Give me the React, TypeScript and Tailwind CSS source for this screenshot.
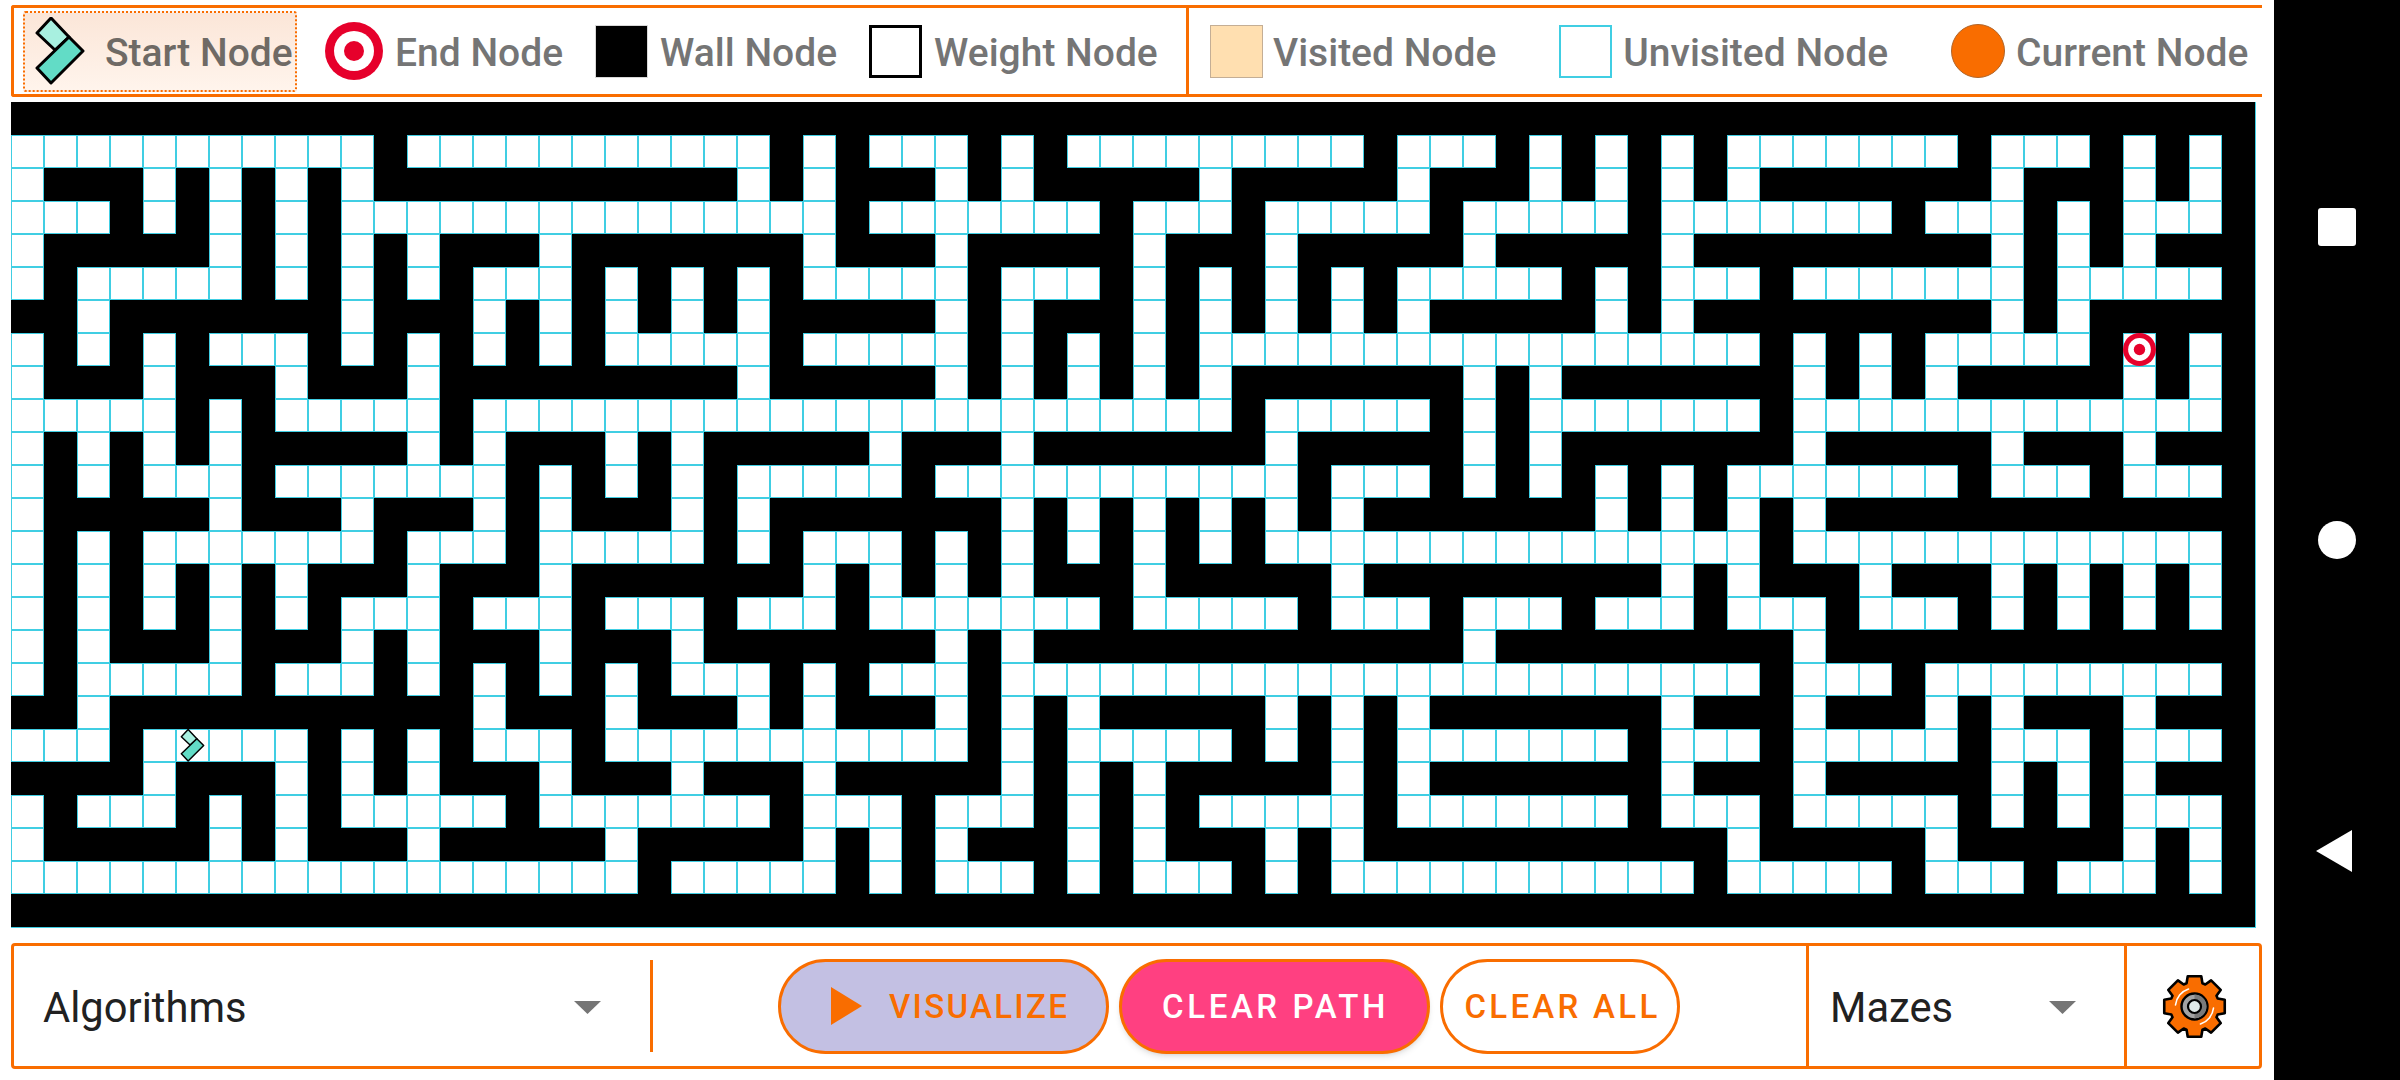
// Maze legend + grid + control bar
const ROWS: string[] = [
  "",
  "0-10,12-22,24,26-28,30,32-40,42-44,46,48,50,52-58,60-62,64,66",
  "0,4,6,8,10,22,24,28,30,36,42,46,48,50,52,60,64,66",
  "0-2,4,6,8,10-24,26-32,34-36,38-42,44-48,50-56,58-60,62,64-66",
  "0,6,8,10,12,16,24,28,34,38,44,50,60,62,64",
  "0,2-6,8,10,12,14-16,18,20,22,24-28,30-32,34,36,38,40,42-46,48,50-52,54-60,62-66",
  "2,10,14,16,18,20,22,28,30,34,36,38,40,42,48,50,60,62",
  "0,2,4,6-8,10,12,14,16,18-22,24-28,30,32,34,36-52,54,56,58-62,64,66",
  "0,4,8,12,22,28,30,32,34,36,44,46,54,56,58,64,66",
  "0-4,6,8-12,14-36,38-42,44,46-52,54-66",
  "0,2,4,6,12,14,18,20,26,30,38,44,46,54,60,64",
  "0,2,4-6,8-14,16,18,20,22-26,28-38,40-42,44,46,48,50,52-58,60-62,64-66",
  "0,6,10,14,16,20,22,30,32,34,36,38,40,48,50,52,54",
  "0,2,4-10,12-14,16-20,22,24-26,28,30,32,34,36,38-52,54-66",
  "0,2,4,6,8,12,16,24,26,28,30,34,40,50,52,56,60,62,64,66",
  "0,2,4,6,8,10-12,14-16,18-20,22-24,26-32,34-38,40-42,44-46,48-50,52-54,56-58,60,62,64,66",
  "0,2,6,10,12,16,20,28,30,44,54",
  "0,2-6,8-10,12,14,16,18,20-22,24,26-28,30-52,54-56,58-66",
  "2,14,18,22,24,28,30,32,38,40,42,50,54,58,60,64",
  "0-2,4-8,10,12,14-16,18-28,30,32-36,38,40,42-48,50-52,54-58,60-62,64-66",
  "4,8,10,12,16,20,24,30,32,34,40,42,50,54,60,62,64",
  "0,2-4,6,8,10-14,16-22,24-26,28-30,32,34,36-40,42-48,50-52,54-58,60,62,64-66",
  "0,6,8,12,18,24,26,28,32,34,38,40,52,58,64,66",
  "0-18,20-24,26,28-30,32,34-36,38,40-50,52-56,58-60,62-64,66",
  "",
];

const COLS = 68;

function parseRow(spec: string) {
  const open = new Set<number>();
  if (!spec) return open;
  spec.split(",").forEach((part) => {
    const [a, b] = part.split("-").map(Number);
    for (let i = a; i <= (b ?? a); i++) open.add(i);
  });
  return open;
}

function StartIcon({ className }: { className: string }) {
  return (
    <svg viewBox="0 0 50 68" className={className}>
      <polygon points="16,1 2,16 20,33 34,20" fill="#a8f0e0" stroke="#000" strokeWidth="3" strokeLinejoin="round" />
      <polygon points="34,20 48,34 16,66 2,51" fill="#62dcc6" stroke="#000" strokeWidth="3" strokeLinejoin="round" />
    </svg>
  );
}

function TargetIcon({ className }: { className: string }) {
  return (
    <svg viewBox="0 0 58 58" className={className}>
      <circle cx="29" cy="29" r="29" fill="#e6002b" />
      <circle cx="29" cy="29" r="20" fill="#fff" />
      <circle cx="29" cy="29" r="10" fill="#e6002b" />
    </svg>
  );
}

function GearIcon() {
  const c = 32.5;
  const pts: string[] = [];
  for (let i = 0; i < 8; i++) {
    const a = (i * Math.PI) / 4 - Math.PI / 2;
    const add = (r: number, d: number) =>
      pts.push(`${(c + r * Math.cos(a + d)).toFixed(2)},${(c + r * Math.sin(a + d)).toFixed(2)}`);
    add(24.5, -0.33);
    add(31, -0.22);
    add(31, 0.22);
    add(24.5, 0.33);
  }
  return (
    <svg viewBox="0 0 65 65" className="w-[65px] h-[65px] ml-[3px]">
      <polygon points={pts.join(" ")} fill="#f96d00" stroke="#000" strokeWidth="2.6" strokeLinejoin="round" />
      <path d="M13.5 31a19 19 0 0 1 13-16" fill="none" stroke="#fff" strokeWidth="1.6" strokeLinecap="round" />
      <path d="M51.5 34a19 19 0 0 1-13 16" fill="none" stroke="#fff" strokeWidth="1.6" strokeLinecap="round" />
      <circle cx="32.5" cy="32.5" r="13" fill="#a3a3a3" stroke="#000" strokeWidth="2.4" />
      <path d="M32.5 20.5a12 12 0 0 1 0 24z" fill="#7a7a7a" />
      <circle cx="32.5" cy="32.5" r="6.5" fill="#dfe9e8" stroke="#000" strokeWidth="2.2" />
    </svg>
  );
}

function Caret() {
  return (
    <svg viewBox="0 0 27 13" className="w-[27px] h-[13px] mt-[2px]">
      <polygon points="0,0 27,0 13.5,13" fill="#757575" />
    </svg>
  );
}

function LegendLabel({ children }: { children: string }) {
  return <span className="block pt-[4px] text-[39px] leading-none font-medium text-[#757575] whitespace-nowrap">{children}</span>;
}

function Maze() {
  return (
    <div className="grid grid-cols-[repeat(68,33px)] grid-rows-[repeat(25,33px)] w-[2245px] h-[826px] mt-[5px] border-r border-b border-[#40cee3] flex-none">
      {ROWS.map((spec, r) => {
        const open = parseRow(spec);
        return Array.from({ length: COLS }, (_, c) => (
          <div
            key={`${r}-${c}`}
            className={open.has(c) ? "bg-white border border-[#40cee3] flex items-center justify-center" : "bg-black"}
          >
            {r === 7 && c === 64 && <TargetIcon className="w-[33px] h-[33px] flex-none" />}
            {r === 19 && c === 5 && <StartIcon className="w-[25px] h-[33px] flex-none" />}
          </div>
        ));
      })}
    </div>
  );
}

function Legend() {
  return (
    <div className="flex flex-none w-[2251px] h-[92px] mt-[5px] border-l-[3px] border-y-[3px] border-[#f96d00] rounded-l-[3px]">
      <div className="flex items-center w-[1175px] border-r-[3px] border-[#f96d00] flex-none">
        <div className="flex items-center ml-[9px] w-[274px] h-[81px] pl-[10px] border-2 border-dotted border-[#f96d00] rounded-[3px] bg-gradient-to-b from-[#fbe6d8] to-[#fff4ec] flex-none">
          <StartIcon className="w-[50px] h-[68px] flex-none" />
          <span className="block pt-[4px] ml-[20px] text-[39px] leading-none font-medium text-[#6f6a65] whitespace-nowrap">Start Node</span>
        </div>
        <TargetIcon className="ml-[28px] w-[58px] h-[58px] flex-none" />
        <div className="ml-[12px]">
          <LegendLabel>End Node</LegendLabel>
        </div>
        <div className="ml-[32px] w-[53px] h-[53px] bg-black border border-[#d8d8d8] flex-none" />
        <div className="ml-[12px]">
          <LegendLabel>Wall Node</LegendLabel>
        </div>
        <div className="ml-[32px] w-[53px] h-[53px] bg-white border-[3px] border-black flex-none" />
        <div className="ml-[12px]">
          <LegendLabel>Weight Node</LegendLabel>
        </div>
      </div>
      <div className="flex items-center flex-1">
        <div className="ml-[21px] w-[53px] h-[53px] bg-[#ffdfb0] border border-[#c4ae95] flex-none" />
        <div className="ml-[10px]">
          <LegendLabel>Visited Node</LegendLabel>
        </div>
        <div className="ml-[63px] w-[53px] h-[53px] bg-white border-[2px] border-[#40cee3] flex-none" />
        <div className="ml-[11px]">
          <LegendLabel>Unvisited Node</LegendLabel>
        </div>
        <div className="ml-[63px] w-[54px] h-[54px] rounded-full bg-[#f96d00] border border-[#b0652a] flex-none" />
        <div className="ml-[11px]">
          <LegendLabel>Current Node</LegendLabel>
        </div>
      </div>
    </div>
  );
}

function Controls() {
  return (
    <div className="flex flex-none w-[2251px] h-[126px] mt-[15px] border-[3px] border-[#f96d00] rounded-[4px]">
      <div className="flex items-center w-[639px] flex-none">
        <span className="ml-[29px] pt-[4px] text-[41.7px] leading-none text-[#212121]">Algorithms</span>
        <div className="ml-auto mr-[49px]">
          <Caret />
        </div>
        <div className="w-[3px] h-[92px] bg-[#f96d00] flex-none" />
      </div>
      <div className="flex items-center w-[1156px] flex-none border-r-[3px] border-[#f96d00]">
        <button className="ml-[125px] flex items-center w-[331px] h-[95px] pl-[50px] rounded-full border-[3px] border-[#f96d00] bg-[#c3c0e3] flex-none">
          <svg viewBox="0 0 31 38" className="w-[31px] h-[38px] flex-none">
            <polygon points="0,0 31,19 0,38" fill="#f96d00" />
          </svg>
          <span className="ml-[27px] pt-[1px] text-[33px] leading-none font-medium tracking-[2.3px] text-[#f96d00]">VISUALIZE</span>
        </button>
        <button className="ml-[10px] w-[311px] h-[95px] pt-[1px] pl-[2px] rounded-full border-[3px] border-[#f96d00] bg-[#ff4081] text-[33px] leading-none font-medium tracking-[3.6px] text-white shadow-md flex-none">
          CLEAR PATH
        </button>
        <button className="ml-[10px] w-[240px] h-[95px] pt-[1px] pl-[5px] rounded-full border-[3px] border-[#f96d00] bg-white text-[33px] leading-none font-medium tracking-[3.3px] text-[#f96d00] flex-none">
          CLEAR ALL
        </button>
      </div>
      <div className="flex items-center w-[318px] flex-none border-r-[3px] border-[#f96d00]">
        <span className="ml-[21px] pt-[4px] text-[41.7px] leading-none text-[#212121]">Mazes</span>
        <div className="ml-auto mr-[48px]">
          <Caret />
        </div>
      </div>
      <div className="flex items-center justify-center flex-1">
        <GearIcon />
      </div>
    </div>
  );
}

export default function App() {
  return (
    <div className="flex w-[2400px] h-[1080px] overflow-hidden bg-white font-[family-name:Roboto,sans-serif]">
      <div className="flex flex-col w-[2274px] pl-[11px] flex-none">
        <Legend />
        <Maze />
        <Controls />
      </div>
      <div className="flex flex-col items-center justify-between w-[126px] h-full py-[208px] bg-black flex-none">
        <div className="w-[38px] h-[38px] rounded-[3px] bg-white" />
        <div className="w-[38px] h-[38px] rounded-full bg-white mt-[3px]" />
        <svg viewBox="0 0 36 42" className="w-[36px] h-[42px] mr-[6px]">
          <polygon points="36,0 36,42 0,21" fill="#fff" />
        </svg>
      </div>
    </div>
  );
}
